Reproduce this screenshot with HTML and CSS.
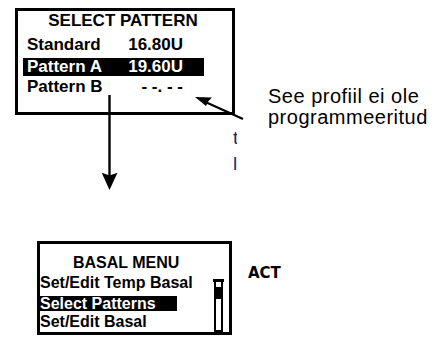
FILE: index.html
```html
<!DOCTYPE html>
<html lang="et">
<head>
<meta charset="UTF-8">
<meta name="viewport" content="width=device-width, initial-scale=1.0">
<title>Select pattern</title>
<link rel="stylesheet" href="styles.css">
</head>
<body>

<div class="sheet">

  <div class="lcd lcd-pattern">
    <div class="lcd-title">SELECT PATTERN</div>
    <div class="pattern-row">
      <span>Standard</span>
      <span class="value">16.80U</span>
    </div>
    <div class="pattern-row selected">
      <span>Pattern A</span>
      <span class="value">19.60U</span>
    </div>
    <div class="pattern-row">
      <span>Pattern B</span>
      <span class="value">- -. - -</span>
    </div>
  </div>

  <div class="note">See profiil ei ole<br>programmeeritud</div>

  <div class="cut-text">t<br>l</div>

  <div class="lcd lcd-basal">
    <div class="basal-title">BASAL MENU</div>
    <div class="menu-body">
      <div class="menu-list">
        <div class="menu-item">Set/Edit Temp Basal</div>
        <div class="menu-item selected">Select Patterns</div>
        <div class="menu-item">Set/Edit Basal</div>
      </div>
      <div class="scroll">
        <div class="scroll-cap"></div>
        <div class="scroll-track">
          <div class="scroll-thumb"></div>
        </div>
      </div>
    </div>
  </div>

  <div class="act">ACT</div>

  <svg class="arrows" width="436" height="338" viewBox="0 0 436 338">
    <line x1="109.5" y1="95" x2="109.5" y2="176" stroke="#000" stroke-width="2.4"/>
    <polygon points="101.7,172.7 109.5,175.5 117.5,172.7 109.5,190" fill="#000"/>
    <line x1="243" y1="119" x2="201" y2="100" stroke="#000" stroke-width="2.2"/>
    <polygon points="195,97 212,97.5 208.5,101 206,106" fill="#000"/>
  </svg>

</div>

</body>
</html>
```

FILE: styles.css
```css
body {
  margin: 0;
  background-color: #fff;
  font-family: "Liberation Sans", Arial, sans-serif;
  color: #000;
}
.sheet {
  position: relative;
  width: 436px;
  height: 338px;
  overflow: hidden;
}
.lcd {
  position: absolute;
  box-sizing: border-box;
  border: 3px solid #000;
  font-weight: bold;
}

/* select pattern screen */
.lcd-pattern {
  left: 15px;
  top: 8px;
  width: 220px;
  height: 107px;
  font-size: 17px;
}
.lcd-title {
  line-height: 20px;
  text-align: center;
  padding-right: 4px;
}
.pattern-row {
  display: grid;
  grid-template-columns: 101px 55px;
  line-height: 21px;
  margin-left: 5px;
  padding-left: 4px;
  width: 181px;
  box-sizing: border-box;
}
.pattern-row:nth-child(2) {
  margin-top: 3px;
}
.pattern-row .value {
  text-align: right;
}
.pattern-row.selected {
  background-color: #000;
  color: #fff;
  height: 18px;
  line-height: 18px;
  margin-top: 3px;
}

/* callout text */
.note {
  position: absolute;
  left: 268px;
  top: 86px;
  font-size: 20px;
  letter-spacing: 0.5px;
  line-height: 21px;
}
.cut-text {
  position: absolute;
  left: 233px;
  top: 125px;
  width: 4px;
  overflow: hidden;
  font-size: 19px;
  line-height: 26px;
  color: #1b2a6b;
}

/* basal menu screen */
.lcd-basal {
  left: 37px;
  top: 241px;
  width: 195px;
  height: 94px;
  font-size: 16px;
  display: flex;
  flex-direction: column;
}
.basal-title {
  line-height: 20px;
  padding-top: 9px;
  padding-left: 33px;
}
.menu-body {
  display: flex;
  flex: 1;
}
.menu-list {
  flex: 1;
}
.menu-item {
  line-height: 20px;
}
.menu-item.selected {
  background-color: #000;
  color: #fff;
  width: 137px;
  height: 15px;
  line-height: 15px;
  margin-top: 3px;
  margin-bottom: 1px;
}
.scroll {
  display: flex;
  flex-direction: column;
  width: 11px;
  margin-top: 6px;
  margin-right: 5px;
}
.scroll-cap {
  height: 3px;
  background-color: #000;
}
.scroll-track {
  flex: 1;
  margin: 0 1px;
  border: 2px solid #000;
  border-top: none;
}
.scroll-thumb {
  margin-top: 5px;
  height: 12px;
  background-color: #000;
}

.act {
  position: absolute;
  left: 248px;
  top: 264px;
  font-family: "DejaVu Sans", sans-serif;
  font-weight: bold;
  font-size: 15px;
  line-height: 18px;
}

.arrows {
  position: absolute;
  left: 0;
  top: 0;
  pointer-events: none;
}
```
